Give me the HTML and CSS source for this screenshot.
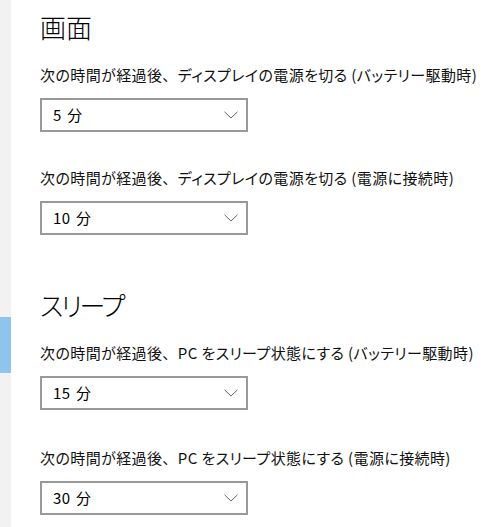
FILE: index.html
```html
<!DOCTYPE html>
<html lang="ja">
<head>
<meta charset="utf-8">
<link rel="stylesheet" href="styles.css">
</head>
<body>
<div class="app">
  <nav class="nav">
    <div class="nav-selected"></div>
  </nav>
  <main class="content">
    <h2 class="heading heading-first">画面</h2>
    <div class="group">
      <div class="label">次の時間が経過後<span class="punct">、</span>ディスプレイの電源を切る (バッテリー駆動時)</div>
      <div class="select"><span class="value">5 分</span><svg class="chevron" width="14" height="8" viewBox="0 0 14 8"><path d="M0.5 0.8 L7 7 L13.5 0.8" fill="none" stroke="#666" stroke-width="1"/></svg></div>
    </div>
    <div class="group">
      <div class="label">次の時間が経過後<span class="punct">、</span>ディスプレイの電源を切る (電源に接続時)</div>
      <div class="select"><span class="value">10 分</span><svg class="chevron" width="14" height="8" viewBox="0 0 14 8"><path d="M0.5 0.8 L7 7 L13.5 0.8" fill="none" stroke="#666" stroke-width="1"/></svg></div>
    </div>
    <h2 class="heading heading-second">スリープ</h2>
    <div class="group">
      <div class="label">次の時間が経過後<span class="punct">、</span>PC をスリープ状態にする (バッテリー駆動時)</div>
      <div class="select"><span class="value">15 分</span><svg class="chevron" width="14" height="8" viewBox="0 0 14 8"><path d="M0.5 0.8 L7 7 L13.5 0.8" fill="none" stroke="#666" stroke-width="1"/></svg></div>
    </div>
    <div class="group group-last">
      <div class="label">次の時間が経過後<span class="punct">、</span>PC をスリープ状態にする (電源に接続時)</div>
      <div class="select"><span class="value">30 分</span><svg class="chevron" width="14" height="8" viewBox="0 0 14 8"><path d="M0.5 0.8 L7 7 L13.5 0.8" fill="none" stroke="#666" stroke-width="1"/></svg></div>
    </div>
  </main>
</div>
</body>
</html>
```
FILE: styles.css
```css
html, body {
  margin: 0;
  padding: 0;
  background: #ffffff;
}
body {
  font-family: "Noto Sans CJK JP", "Noto Sans", sans-serif;
  font-feature-settings: "palt";
  color: #000;
  overflow: hidden;
}
.app {
  display: flex;
  height: 527px;
}
.nav {
  width: 11px;
  flex: none;
  background: #f2f2f2;
  display: flex;
  flex-direction: column;
}
.nav-selected {
  margin-top: 317px;
  height: 56px;
  background: #8fc4ec;
}
.content {
  flex: 1;
  padding-left: 29px;
  display: flex;
  flex-direction: column;
}
.heading {
  margin: 0;
  font-size: 26px;
  font-weight: 300;
  line-height: 34px;
  color: #000;
}
.heading-first {
  margin-top: 10px;
}
.heading-second {
  margin-top: 53px;
  letter-spacing: -2.5px;
}
.group {
  display: flex;
  flex-direction: column;
  gap: 13px;
  margin-top: 36px;
}
.heading + .group {
  margin-top: 21px;
}
.group-last {
  margin-top: 38px;
}
.label {
  font-size: 15px;
  line-height: 20px;
  white-space: nowrap;
  letter-spacing: 0.4px;
  color: #111;
}
.punct {
  font-feature-settings: normal;
}
.select {
  box-sizing: border-box;
  width: 208px;
  height: 34px;
  border: 2px solid #999;
  display: flex;
  align-items: center;
  justify-content: space-between;
  padding: 0 8px 0 11px;
}
.value {
  font-size: 15px;
  line-height: 20px;
  letter-spacing: 0.3px;
  word-spacing: 2px;
}
.chevron {
  display: block;
}
```
